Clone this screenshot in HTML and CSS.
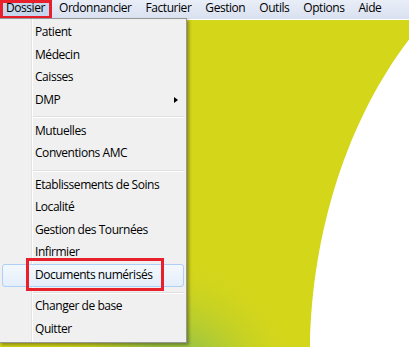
FILE: index.html
```html
<!DOCTYPE html>
<html>

<head>
    <title>Dossier</title>
    <link rel="stylesheet" href="styles.css">
</head>

<body>
    <div class="menubar">
        <span class="top-item open">Dossier</span>
        <span class="top-item">Ordonnancier</span>
        <span class="top-item">Facturier</span>
        <span class="top-item">Gestion</span>
        <span class="top-item">Outils</span>
        <span class="top-item">Options</span>
        <span class="top-item">Aide</span>
    </div>

    <div class="desktop">
        <!-- fond vert / blanc -->
        <svg class="backdrop" viewBox="0 0 409 327">
            <defs>
                <radialGradient id="leaf" cx="170" cy="370" r="135" gradientUnits="userSpaceOnUse">
                    <stop offset="0.35" stop-color="#9ec541" />
                    <stop offset="1" stop-color="#d4d61a" stop-opacity="0" />
                </radialGradient>
            </defs>
            <rect width="409" height="327" fill="url(#leaf)" />
            <path d="M425 0 C355 80 312 200 310 327 L409 327 L409 0 Z" fill="#fff" />
        </svg>

        <div class="dropdown">
            <div class="item">Patient</div>
            <div class="item">Médecin</div>
            <div class="item">Caisses</div>
            <div class="item sub">DMP<span class="arrow"></span></div>
            <div class="sep"></div>
            <div class="item">Mutuelles</div>
            <div class="item">Conventions AMC</div>
            <div class="sep"></div>
            <div class="item">Etablissements de Soins</div>
            <div class="item">Localité</div>
            <div class="item">Gestion des Tournées</div>
            <div class="item">Infirmier</div>
            <div class="item hover marked">Documents numérisés</div>
            <div class="sep"></div>
            <div class="item">Changer de base</div>
            <div class="item">Quitter</div>
        </div>
    </div>
</body>

</html>
```

FILE: styles.css
```css
body {
    margin: 0;
    font-family: "Open Sans", "Noto Sans", sans-serif;
    font-size: 12px;
    letter-spacing: -0.45px;
    color: #000;
    overflow: hidden;
}

.menubar {
    display: flex;
    height: 19px;
    border-bottom: 1px solid #fff;
    background: linear-gradient(#e9eef8, #d9e0ef);
}

.top-item {
    padding: 0 7px;
    line-height: 16px;
}

.top-item.open {
    width: 52px;
    box-sizing: border-box;
    padding: 0 6px;
    height: 19px;
    background-color: #c6d6ec;
    box-shadow: inset 0 0 0 3px #e8202b;
}

.desktop {
    position: relative;
    height: 327px;
    background-color: #d4d61a;
}

.backdrop {
    display: block;
    width: 409px;
    height: 327px;
}

.dropdown {
    position: absolute;
    left: -1px;
    top: -2px;
    width: 188px;
    box-sizing: border-box;
    border: 1px solid #979797;
    padding: 2px;
    background: linear-gradient(to right, #f0f0f0 31px, #e2e3e3 31px, #e2e3e3 32px, #fff 32px, #fff 33px, #f0f0f0 33px);
    box-shadow: 2px 2px 3px rgba(0, 0, 0, 0.35);
}

.item {
    position: relative;
    height: 22.6px;
    line-height: 22.6px;
    padding-left: 33px;
    box-sizing: border-box;
    white-space: nowrap;
}

.item.hover {
    padding-left: 32px;
    line-height: 20.6px;
    border: 1px solid #aecff7;
    border-radius: 3px;
    background: linear-gradient(#f3f8fd, #e4eefa);
}

.item.marked::after {
    content: "";
    position: absolute;
    left: 23px;
    top: -7px;
    width: 138px;
    height: 33px;
    box-sizing: border-box;
    border: 3px solid #e8202b;
}

.arrow {
    position: absolute;
    right: 6px;
    top: 8px;
    width: 0;
    height: 0;
    border-left: 4px solid #000;
    border-top: 3.5px solid transparent;
    border-bottom: 3.5px solid transparent;
}

.sep {
    margin: 5px 0 1.5px 31px;
    border-top: 1px solid #e0e0e0;
    border-bottom: 1px solid #fff;
}
```
